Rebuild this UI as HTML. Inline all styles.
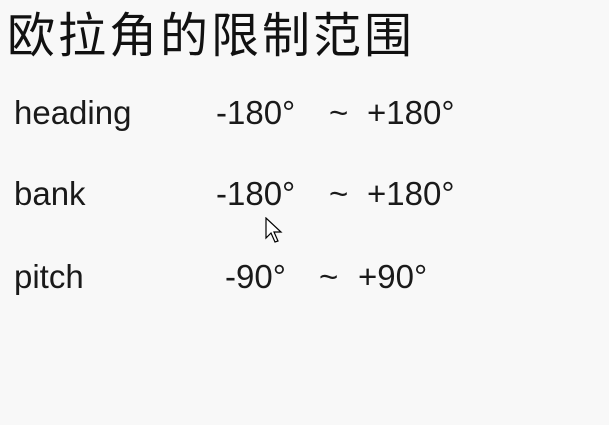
<!DOCTYPE html>
<html><head><meta charset="utf-8"><style>
body{margin:0;width:609px;height:425px;background:#f8f8f8;overflow:hidden;position:relative;color:#111;}
.t{position:absolute;left:7px;top:1px;font:48px "Noto Sans CJK SC","WenQuanYi Zen Hei",sans-serif;letter-spacing:3px;line-height:60px;white-space:nowrap;font-weight:400}
.s{position:absolute;font:33px "Liberation Sans",Arial,sans-serif;line-height:33px;white-space:nowrap;color:#1a1a1a}
</style></head><body>
<div class="t">欧拉角的限制范围</div>
<div class="s" style="left:14px;top:96px">heading</div>
<div class="s" style="left:216px;top:96px">-180°</div>
<div class="s" style="left:329px;top:96px">~</div>
<div class="s" style="left:367px;top:96px">+180°</div>
<div class="s" style="left:14px;top:177px">bank</div>
<div class="s" style="left:216px;top:177px">-180°</div>
<div class="s" style="left:329px;top:177px">~</div>
<div class="s" style="left:367px;top:177px">+180°</div>
<div class="s" style="left:14px;top:260px">pitch</div>
<div class="s" style="left:225px;top:260px">-90°</div>
<div class="s" style="left:319px;top:260px">~</div>
<div class="s" style="left:358px;top:260px">+90°</div>
<svg style="position:absolute;left:265px;top:217px" width="20" height="30" viewBox="0 0 20 30"><path d="M1 1 L1 21 L6 16 L10 25 L13 24 L9 15 L16 15 Z" fill="#fff" stroke="#000" stroke-width="1.2"/></svg>
</body></html>
